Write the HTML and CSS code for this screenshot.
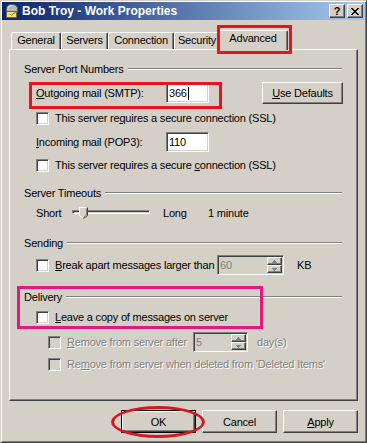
FILE: index.html
```html
<!DOCTYPE html>
<html lang="en">
<head>
    <meta charset="UTF-8">
    <title>Bob Troy - Work Properties</title>
    <link rel="stylesheet" href="styles.css">
</head>
<body>
    <div class="window">
        <!-- Title bar -->
        <div class="title-bar">
            <svg class="title-icon" width="16" height="16" viewBox="0 0 16 16">
                <path d="M2.5 9.5 V6 C2.5 2.5 5 1.5 8 1.5 C11 1.5 13.5 2.5 13.5 6 V9.5 Z" fill="#b8b8b8" stroke="#5a5a5a"/>
                <path d="M4 5.5 C4 3.5 6 2.5 8 2.5" fill="none" stroke="#f0f0f0"/>
                <rect x="2.5" y="8.5" width="10" height="6" fill="#f6e27a" stroke="#7a6420"/>
                <path d="M2.5 8.5 L7.5 12 L12.5 8.5" fill="none" stroke="#7a6420"/>
                <path d="M3.5 9.5 L7.5 11" stroke="#fffbe0"/>
            </svg>
            <span class="title-text">Bob Troy - Work Properties</span>
            <div class="title-buttons">
                <div class="cap-btn cap-help">?</div>
                <div class="cap-btn cap-close">
                    <svg width="8" height="7" viewBox="0 0 8 7">
                        <path d="M0 0h2v1h1v1h2v-1h1v-1h2v1h-1v1h-1v1h-1v1h1v1h1v1h1v1h-2v-1h-1v-1h-2v1h-1v1h-2v-1h1v-1h1v-1h1v-1h-1v-1h-1v-1h-1z" fill="#000"/>
                    </svg>
                </div>
            </div>
        </div>

        <div class="dialog-body">
            <!-- Tabs -->
            <div class="tabs">
                <div class="tab tab-general">General</div>
                <div class="tab tab-servers">Servers</div>
                <div class="tab tab-connection">Connection</div>
                <div class="tab tab-security">Security</div>
                <div class="tab tab-advanced selected">Advanced</div>
            </div>

            <div class="panel">
                <!-- Server Port Numbers -->
                <div class="group-head hd-ports"><span>Server Port Numbers</span><div class="etch"></div></div>
                <div class="row row-outgoing">
                    <span class="port-label"><u>O</u>utgoing mail (SMTP):</span>
                    <div class="field port-field">366<span class="caret"></span></div>
                    <div class="btn btn-defaults"><u>U</u>se Defaults</div>
                </div>
                <div class="row row-check row-ssl1">
                    <div class="cb"></div>
                    <span>This server re<u>q</u>uires a secure connection (SSL)</span>
                </div>
                <div class="row row-incoming">
                    <span class="port-label"><u>I</u>ncoming mail (POP3):</span>
                    <div class="field port-field">110</div>
                </div>
                <div class="row row-check row-ssl2">
                    <div class="cb"></div>
                    <span>This server requires a secure <u>c</u>onnection (SSL)</span>
                </div>

                <!-- Server Timeouts -->
                <div class="group-head hd-timeouts"><span>Server Timeouts</span><div class="etch"></div></div>
                <div class="row row-slider">
                    <span class="short-label">Short</span>
                    <div class="slider">
                        <div class="track"></div>
                        <svg class="thumb" width="9" height="12" viewBox="0 0 9 12">
                            <path d="M0.5 8.5 V0.5 H8.5 V8.5 L4.5 11.5 Z" fill="#d4d0c8"/>
                            <path d="M0.5 8.5 V0.5 H7.5" fill="none" stroke="#fff"/>
                            <path d="M0.5 8.5 L3.5 11" fill="none" stroke="#fff"/>
                            <path d="M8.5 0.5 V8.5 L4.5 11.5" fill="none" stroke="#404040"/>
                            <path d="M7.5 1.5 V8 L4.5 10.5" fill="none" stroke="#808080"/>
                        </svg>
                    </div>
                    <span class="long-label">Long</span>
                    <span>1 minute</span>
                </div>

                <!-- Sending -->
                <div class="group-head hd-sending"><span>Sending</span><div class="etch"></div></div>
                <div class="row row-break">
                    <div class="cb"></div>
                    <span class="break-label"><u>B</u>reak apart messages larger than</span>
                    <div class="field disabled spin-field break-field">
                        <span class="field-value">60</span>
                        <div class="spin">
                            <div class="spin-btn"><svg width="5" height="3" viewBox="0 0 5 3"><path d="M2 0h1v1h1v1h1v1h-5v-1h1v-1h1z" fill="#808080"/></svg></div>
                            <div class="spin-btn"><svg width="5" height="3" viewBox="0 0 5 3"><path d="M0 0h5v1h-1v1h-1v1h-1v-1h-1v-1h-1z" fill="#808080"/></svg></div>
                        </div>
                    </div>
                    <span class="unit-kb">KB</span>
                </div>

                <!-- Delivery -->
                <div class="group-head hd-delivery"><span>Delivery</span><div class="etch"></div></div>
                <div class="row row-check row-leave">
                    <div class="cb"></div>
                    <span><u>L</u>eave a copy of messages on server</span>
                </div>
                <div class="row row-sub row-remove-after">
                    <div class="cb disabled"></div>
                    <span class="remove-label dim"><u>R</u>emove from server after</span>
                    <div class="field disabled spin-field days-field">
                        <span class="field-value">5</span>
                        <div class="spin">
                            <div class="spin-btn"><svg width="5" height="3" viewBox="0 0 5 3"><path d="M2 0h1v1h1v1h1v1h-5v-1h1v-1h1z" fill="#808080"/></svg></div>
                            <div class="spin-btn"><svg width="5" height="3" viewBox="0 0 5 3"><path d="M0 0h5v1h-1v1h-1v1h-1v-1h-1v-1h-1z" fill="#808080"/></svg></div>
                        </div>
                    </div>
                    <span class="unit-days dim">day(s)</span>
                </div>
                <div class="row row-sub row-remove-deleted">
                    <div class="cb disabled"></div>
                    <span class="dim">Re<u>m</u>ove from server when deleted from 'Deleted Items'</span>
                </div>
            </div>

            <!-- Dialog buttons -->
            <div class="button-row">
                <div class="btn btn-dialog default">OK</div>
                <div class="btn btn-dialog">Cancel</div>
                <div class="btn btn-dialog"><u>A</u>pply</div>
            </div>
        </div>

        <!-- Highlight marks drawn over the dialog -->
        <div class="mark mark-tab"></div>
        <div class="mark mark-smtp"></div>
        <div class="mark mark-delivery"></div>
        <div class="mark mark-ok"></div>
    </div>
</body>
</html>
```

FILE: styles.css
```css
* {
    box-sizing: border-box;
}
body {
    margin: 0;
    background: #d4d0c8;
    font-family: "Liberation Sans", Arial, sans-serif;
    font-size: 11px;
    letter-spacing: -0.2px;
    color: #000;
}
u {
    text-decoration: underline;
}

/* Window frame */
.window {
    position: relative;
    width: 367px;
    height: 443px;
    background: #d4d0c8;
    border: 1px solid;
    border-color: #d4d0c8 #404040 #404040 #d4d0c8;
    box-shadow: inset 1px 1px #fff, inset -1px -1px #808080;
    padding: 1px;
}
.title-bar {
    height: 18px;
    display: flex;
    align-items: center;
    padding-left: 2px;
    background: linear-gradient(to right, #0a246a, #a6caf0);
}
.title-icon {
    flex: none;
    margin-right: 2px;
}
.title-text {
    color: #fff;
    font-weight: bold;
    font-size: 12px;
    letter-spacing: 0;
}
.title-buttons {
    margin-left: auto;
    margin-right: 2px;
    display: flex;
    gap: 2px;
}
.cap-btn {
    width: 16px;
    height: 14px;
    background: #d4d0c8;
    border: 1px solid;
    border-color: #fff #404040 #404040 #fff;
    box-shadow: inset -1px -1px #808080;
    display: flex;
    align-items: center;
    justify-content: center;
    font-weight: bold;
    font-size: 11px;
    letter-spacing: 0;
    line-height: 12px;
}

/* Dialog body */
.dialog-body {
    padding: 0 7px;
}
.tabs {
    height: 29px;
    display: flex;
    align-items: flex-end;
    padding-left: 2px;
}
.tab {
    height: 17px;
    background: #d4d0c8;
    border-top: 1px solid #fff;
    border-left: 1px solid #fff;
    border-right: 1px solid #404040;
    box-shadow: inset -1px 0 #808080;
    border-top-left-radius: 2px;
    border-top-right-radius: 2px;
    text-align: center;
    line-height: 15px;
}
.tab-general { width: 50px; }
.tab-servers { width: 47px; }
.tab-connection { width: 66px; }
.tab-security { width: 46px; }
.tab-advanced { width: 66px; }
.tab.selected {
    position: relative;
    z-index: 1;
    width: 70px;
    height: 20px;
    margin: 0 -2px -1px -2px;
}
.panel {
    height: 352px;
    border: 1px solid;
    border-color: #fff #404040 #404040 #fff;
    box-shadow: inset -1px -1px #808080;
    padding: 12px 14px 0 14px;
}

/* Group headings with etched line */
.group-head {
    display: flex;
    align-items: center;
    height: 14px;
}
.etch {
    flex: 1;
    height: 2px;
    margin-left: 4px;
    margin-right: 1px;
    border-top: 1px solid #808080;
    border-bottom: 1px solid #fff;
}
.hd-timeouts { margin-top: 14px; }
.hd-sending { margin-top: 14px; }
.hd-delivery { margin-top: 15px; }

.row {
    display: flex;
    align-items: center;
    padding-left: 12px;
    height: 14px;
    white-space: nowrap;
}
.row-sub {
    padding-left: 24px;
}
.row-outgoing { margin-top: 6px; height: 22px; }
.row-ssl1 { margin-top: 7px; }
.row-incoming { margin-top: 7px; height: 20px; }
.row-ssl2 { margin-top: 6px; }
.row-slider { margin-top: 4px; height: 18px; }
.row-break { margin-top: 5px; height: 20px; }
.row-leave { margin-top: 6px; }
.row-remove-after { margin-top: 8px; height: 20px; }
.row-remove-deleted { margin-top: 5px; }

.port-label {
    width: 130px;
}

/* Sunken edit fields */
.field {
    height: 20px;
    background: #fff;
    border: 1px solid;
    border-color: #808080 #fff #fff #808080;
    box-shadow: inset 1px 1px #404040, inset -1px -1px #d4d0c8;
    padding: 0 2px;
    line-height: 18px;
    display: flex;
    align-items: center;
}
.port-field {
    width: 43px;
}
.caret {
    display: inline-block;
    width: 1px;
    height: 13px;
    background: #000;
    margin-left: 1px;
}
.field.disabled {
    background: #d4d0c8;
    color: #808080;
}
.spin-field {
    padding-right: 1px;
}
.spin {
    margin-left: auto;
    width: 15px;
    height: 16px;
    display: flex;
    flex-direction: column;
}
.spin-btn {
    height: 8px;
    background: #d4d0c8;
    border: 1px solid;
    border-color: #fff #404040 #404040 #fff;
    box-shadow: inset -1px -1px #808080;
    display: flex;
    align-items: center;
    justify-content: center;
}
.break-label { width: 162px; }
.break-field { width: 67px; }
.unit-kb { margin-left: 13px; }
.remove-label { width: 126px; }
.days-field { width: 55px; }
.unit-days { margin-left: 9px; }

.dim {
    color: #808080;
    text-shadow: 1px 1px #fff;
}

/* Checkboxes */
.cb {
    flex: none;
    width: 13px;
    height: 13px;
    margin-right: 6px;
    background: #fff;
    border: 1px solid;
    border-color: #808080 #fff #fff #808080;
    box-shadow: inset 1px 1px #404040, inset -1px -1px #d4d0c8;
}
.cb.disabled {
    background: #d4d0c8;
}

/* Slider */
.short-label { width: 36px; }
.slider {
    position: relative;
    width: 78px;
    height: 18px;
}
.track {
    margin-top: 6px;
    height: 4px;
    border: 1px solid;
    border-color: #808080 #fff #fff #808080;
    box-shadow: inset 1px 1px #404040;
}
.thumb {
    position: absolute;
    left: 7px;
    top: 3px;
}
.long-label {
    margin-left: 13px;
    width: 45px;
}

/* Push buttons */
.btn {
    display: flex;
    align-items: center;
    justify-content: center;
    background: #d4d0c8;
    border: 1px solid;
    border-color: #fff #404040 #404040 #fff;
    box-shadow: inset -1px -1px #808080;
}
.btn-defaults {
    margin-left: auto;
    margin-right: 0;
    width: 81px;
    height: 22px;
}
.button-row {
    margin-top: 9px;
    display: flex;
    justify-content: flex-end;
    gap: 6px;
}
.btn-dialog {
    width: 75px;
    height: 23px;
}
.btn-dialog.default {
    border-color: #000;
    box-shadow: inset 1px 1px #fff, inset -1px -1px #404040, inset -2px -2px #808080;
}

/* Annotation marks */
.mark {
    position: absolute;
    z-index: 5;
    border: 3px solid #e3161d;
}
.mark-tab {
    left: 216px;
    top: 24px;
    width: 75px;
    height: 29px;
}
.mark-smtp {
    left: 28px;
    top: 81px;
    width: 193px;
    height: 27px;
}
.mark-delivery {
    left: 16px;
    top: 285px;
    width: 246px;
    height: 43px;
    border-color: #e4197d;
}
.mark-ok {
    left: 110px;
    top: 405px;
    width: 94px;
    height: 32px;
    border-color: #d11920;
    border-radius: 50%;
}
```
